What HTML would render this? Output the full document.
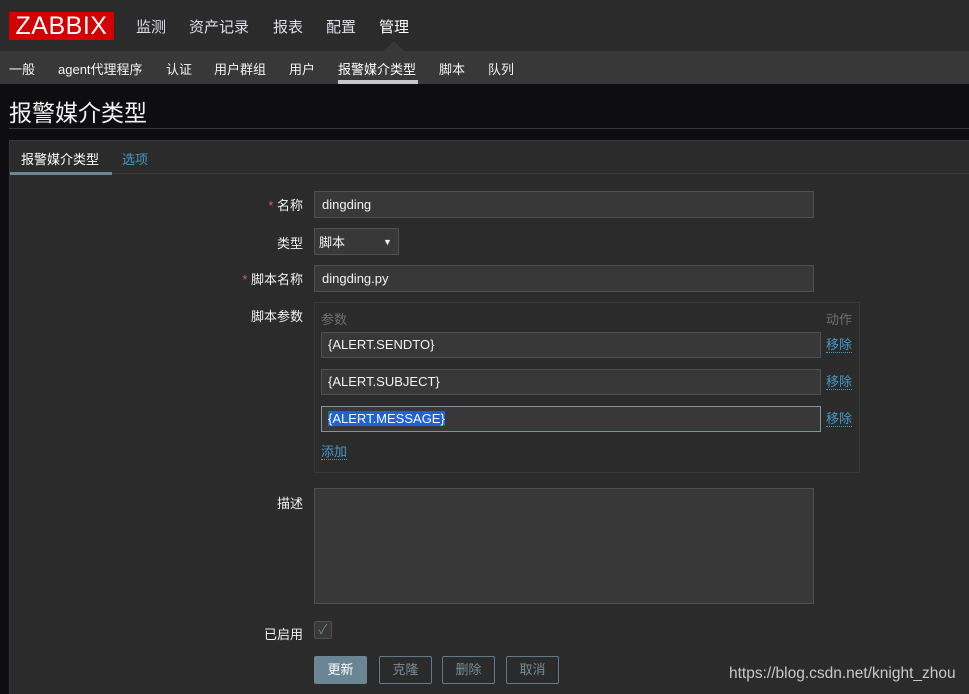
<!DOCTYPE html>
<html><head><meta charset="utf-8"><style>
*{margin:0;padding:0;box-sizing:border-box}
body{width:969px;height:694px;overflow:hidden;background:#0e0e10;font-family:"Liberation Sans","Noto Sans CJK SC",sans-serif;font-size:13px;color:#f2f2f2;position:relative}
.a{position:absolute;white-space:nowrap}
.top{left:0;top:0;width:969px;height:51px;background:#2b2b2b}
.sub{left:0;top:51px;width:969px;height:33px;background:#383838}
.logo{left:9px;top:12px;width:105px;height:28px;background:#d40000;color:#fff;font-size:25px;line-height:28px;text-align:center;letter-spacing:0.5px}
.nav{top:16px;font-size:15px;color:#dde}
.sn{top:59px;font-size:13px;color:#f2f2f2}
.cont{left:9px;top:140px;width:960px;height:554px;background:#2b2b2b;border-top:1px solid #383838;border-left:1px solid #383838}
.lbl{font-size:13px;color:#f2f2f2;text-align:right;width:100px}
.inp{background:#383838;border:1px solid #4f4f4f;color:#f2f2f2;font-size:13px;padding-left:7px}
.link{color:#4796c4;border-bottom:1px dotted #4796c4;font-size:13px;line-height:14px}
.btn{top:656px;height:28px;border:1px solid #5f7a8a;color:#768d99;font-size:13px;line-height:26px;text-align:center;border-radius:2px}
</style></head><body>
<div class="a top"></div>
<div class="a sub"></div>
<div class="a logo">ZABBIX</div>
<div class="a nav" style="left:136px">监测</div>
<div class="a nav" style="left:189px">资产记录</div>
<div class="a nav" style="left:273px">报表</div>
<div class="a nav" style="left:326px">配置</div>
<div class="a nav" style="left:379px;color:#fff">管理</div>
<div class="a" style="left:384px;top:41px;width:0;height:0;border-left:10px solid transparent;border-right:10px solid transparent;border-bottom:10px solid #383838"></div>
<div class="a sn" style="left:9px">一般</div>
<div class="a sn" style="left:58px">agent代理程序</div>
<div class="a sn" style="left:166px">认证</div>
<div class="a sn" style="left:214px">用户群组</div>
<div class="a sn" style="left:289px">用户</div>
<div class="a sn" style="left:338px;color:#fff">报警媒介类型</div>
<div class="a" style="left:338px;top:80px;width:80px;height:4px;background:#c8c8c8"></div>
<div class="a sn" style="left:439px">脚本</div>
<div class="a sn" style="left:488px">队列</div>
<div class="a" style="left:9px;top:94px;font-size:23px;color:#f2f2f2">报警媒介类型</div>
<div class="a" style="left:9px;top:128px;width:960px;height:1px;background:#383838"></div>
<div class="a cont"></div>
<div class="a" style="left:21px;top:149px;font-size:13px;color:#fff">报警媒介类型</div>
<div class="a" style="left:122px;top:149px;font-size:13px;color:#4796c4">选项</div>
<div class="a" style="left:10px;top:173px;width:959px;height:1px;background:#383838"></div>
<div class="a" style="left:10px;top:172px;width:102px;height:3px;background:#6a8593"></div>

<div class="a lbl" style="left:203px;top:195px"><span style="color:#e45959">* </span>名称</div>
<div class="a inp" style="left:314px;top:191px;width:500px;height:27px;line-height:25px">dingding</div>
<div class="a lbl" style="left:203px;top:233px">类型</div>
<div class="a inp" style="left:314px;top:228px;width:85px;height:27px;line-height:27px;padding-left:4px">脚本<span style="position:absolute;left:68px;font-size:9px">▼</span></div>
<div class="a lbl" style="left:203px;top:269px"><span style="color:#e45959">* </span>脚本名称</div>
<div class="a inp" style="left:314px;top:265px;width:500px;height:27px;line-height:25px">dingding.py</div>
<div class="a lbl" style="left:203px;top:306px">脚本参数</div>
<div class="a" style="left:314px;top:302px;width:546px;height:171px;border:1px solid #383838"></div>
<div class="a" style="left:321px;top:309px;color:#6f6f6f">参数</div>
<div class="a" style="left:826px;top:309px;color:#6f6f6f">动作</div>
<div class="a inp" style="left:321px;top:332px;width:500px;height:26px;line-height:24px;padding-left:6px">{ALERT.SENDTO}</div>
<div class="a link" style="left:826px;top:338px">移除</div>
<div class="a inp" style="left:321px;top:369px;width:500px;height:26px;line-height:24px;padding-left:6px">{ALERT.SUBJECT}</div>
<div class="a link" style="left:826px;top:375px">移除</div>
<div class="a inp" style="left:321px;top:406px;width:500px;height:26px;line-height:24px;padding-left:6px;border-color:#7b97a5"><span style="background:#1d62d6;color:#fff">{ALERT.MESSAGE}</span></div>
<div class="a link" style="left:826px;top:412px">移除</div>
<div class="a link" style="left:321px;top:445px">添加</div>
<div class="a lbl" style="left:203px;top:493px">描述</div>
<div class="a inp" style="left:314px;top:488px;width:500px;height:116px"></div>
<div class="a lbl" style="left:203px;top:624px">已启用</div>
<div class="a" style="left:314px;top:621px;width:18px;height:18px;border:1px solid #4f4f4f;background:#383838;border-radius:2px;color:#6a8593;font-size:13px;line-height:16px;text-align:center">✓</div>
<div class="a btn" style="left:314px;width:53px;background:#6a8593;color:#fff;border-color:#6a8593">更新</div>
<div class="a btn" style="left:379px;width:53px">克隆</div>
<div class="a btn" style="left:442px;width:53px">删除</div>
<div class="a btn" style="left:506px;width:53px">取消</div>
<div class="a" style="left:729px;top:665px;font-size:15.5px;color:#c8c8c8">https://blog.csdn.net/knight_zhou</div>
</body></html>
